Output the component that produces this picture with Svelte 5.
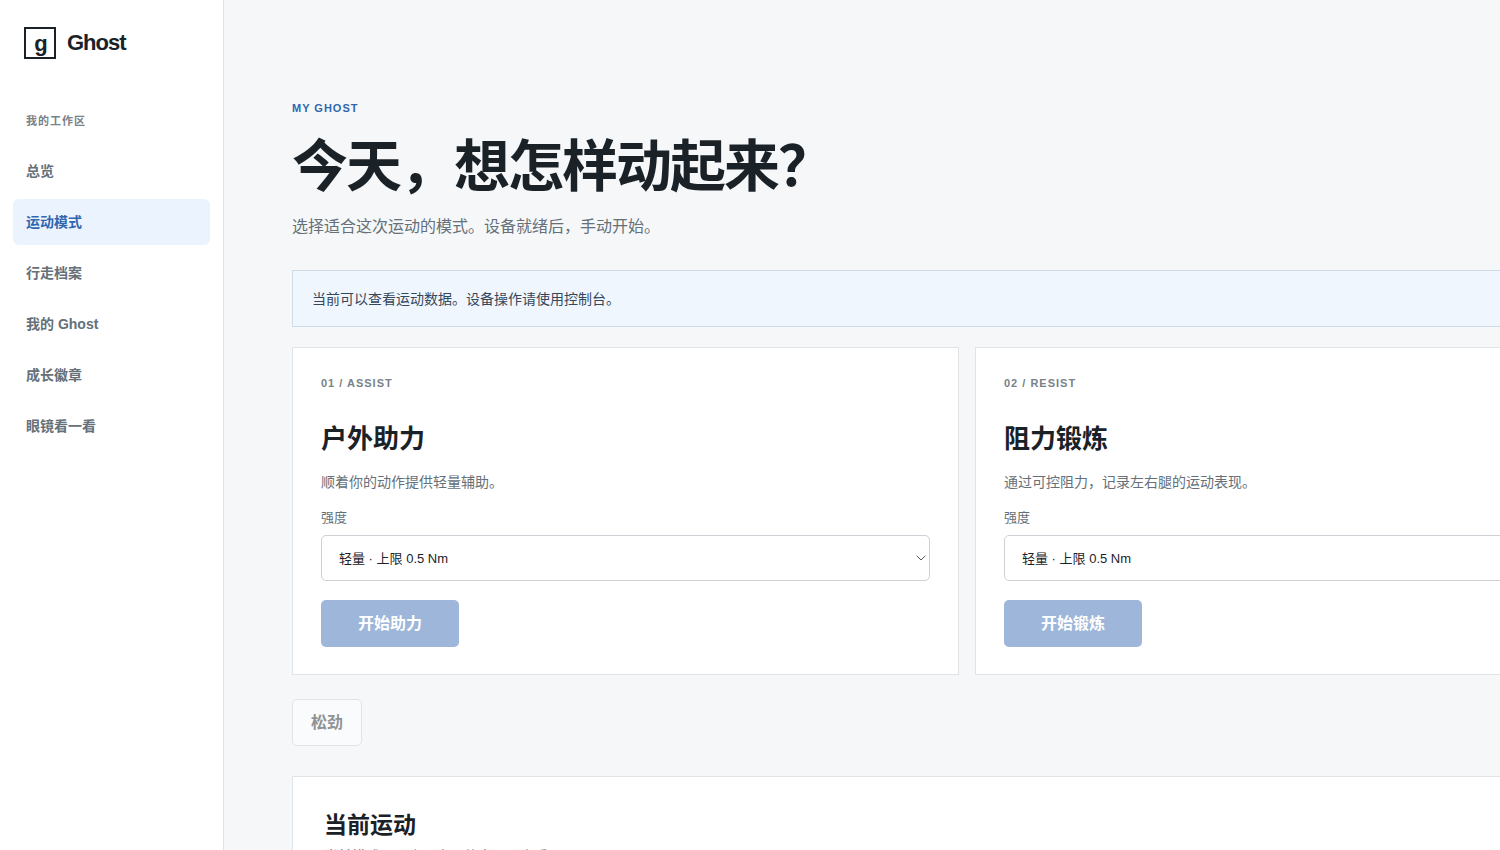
<script lang="ts">
	type Mode = {
		id: string
		tag: string
		title: string
		text: string
		action: string
	}

	const nav = ['总览', '运动模式', '行走档案', '我的 Ghost', '成长徽章', '眼镜看一看']
	const active = '运动模式'

	const modes: Mode[] = [
		{
			id: 'assist',
			tag: '01 / ASSIST',
			title: '户外助力',
			text: '顺着你的动作提供轻量辅助。',
			action: '开始助力',
		},
		{
			id: 'resist',
			tag: '02 / RESIST',
			title: '阻力锻炼',
			text: '通过可控阻力，记录左右腿的运动表现。',
			action: '开始锻炼',
		},
	]
</script>

<div class="shell">
	<aside class="sidebar">
		<a class="brand" href="#home">
			<span class="mark">g</span>
			<span>Ghost</span>
		</a>
		<p class="nav-title">我的工作区</p>
		<nav>
			{#each nav as item}
				<a href="#{item}" class:active={item === active}>{item}</a>
			{/each}
		</nav>
	</aside>

	<main>
		<header>
			<p class="eyebrow">MY GHOST</p>
			<h1>今天，想怎样动起来？</h1>
			<p class="lead">选择适合这次运动的模式。设备就绪后，手动开始。</p>
		</header>

		<p class="notice">当前可以查看运动数据。设备操作请使用控制台。</p>

		<div class="modes">
			{#each modes as mode (mode.id)}
				<article class="card">
					<p class="tag">{mode.tag}</p>
					<h2>{mode.title}</h2>
					<p class="text">{mode.text}</p>
					<label for="level-{mode.id}">强度</label>
					<div class="select">
						<select id="level-{mode.id}">
							<option>轻量 · 上限 0.5 Nm</option>
						</select>
						<svg viewBox="0 0 10 6" aria-hidden="true">
							<path d="M0.7 0.8 5 5 9.3 0.8" />
						</svg>
					</div>
					<button class="primary" disabled>{mode.action}</button>
				</article>
			{/each}
		</div>

		<button class="secondary" disabled>松劲</button>

		<section class="current">
			<h3>当前运动</h3>
			<p>当前模式、强度、实际状态，可查看。</p>
		</section>
	</main>
</div>

<style>
	:global(body) {
		background: #f5f7f9;
		overflow: hidden;
	}
	.shell {
		display: grid;
		grid-template-columns: 224px 1fr;
		height: 100vh;
		overflow: hidden;
		color: #1b2227;
		font-family: 'Liberation Sans', 'Noto Sans CJK SC', sans-serif;
		font-size: 14px;
		line-height: 20px;
	}
	.shell * {
		box-sizing: border-box;
	}
	p,
	h1,
	h2,
	h3 {
		margin: 0;
	}
	.sidebar {
		padding: 27px 13px;
		background: #fff;
		border-right: 1px solid #e0e4e7;
	}
	.brand {
		display: flex;
		align-items: center;
		gap: 11px;
		margin-left: 11px;
		color: inherit;
		font-size: 22px;
		font-weight: 700;
		line-height: 22px;
		letter-spacing: -1px;
		text-decoration: none;
	}
	.mark {
		display: grid;
		place-items: center;
		width: 32px;
		height: 32px;
		padding: 2px 0 0 1px;
		border: 2px solid #1b2227;
	}
	.nav-title {
		margin: 52px 13px 17px;
		color: #78828a;
		font-size: 11px;
		font-weight: 700;
		letter-spacing: 1px;
	}
	nav {
		display: grid;
		gap: 5px;
	}
	nav a {
		padding: 13px;
		border-radius: 6px;
		color: #657078;
		font-weight: 700;
		text-decoration: none;
	}
	nav a.active {
		background: #eaf3fe;
		color: #3167ae;
	}
	main {
		/* both mode cards stay side by side, the rest runs off to the right */
		min-width: 1486px;
		padding: 98px 68px;
	}
	.eyebrow {
		color: #3167ae;
		font-size: 11px;
		font-weight: 700;
		letter-spacing: 1px;
	}
	h1 {
		margin: 17px 0 18px;
		font-size: 56px;
		line-height: 64px;
		letter-spacing: -2px;
	}
	.lead {
		color: #657078;
		font-size: 16px;
	}
	.notice {
		margin: 33px 0 20px;
		padding: 18px 19px 17px;
		background: #f0f6fe;
		border: 1px solid #cfdbe6;
		color: #35475a;
	}
	.modes {
		display: grid;
		grid-template-columns: 1fr 1fr;
		gap: 16px;
	}
	.card {
		padding: 25px 28px 27px;
		background: #fff;
		border: 1px solid #e0e4e7;
	}
	.tag {
		color: #78828a;
		font-size: 11px;
		font-weight: 700;
		letter-spacing: 1px;
	}
	h2 {
		margin: 28px 0 15px;
		font-size: 26px;
		line-height: 36px;
	}
	.text {
		color: #657078;
	}
	label {
		display: block;
		margin: 16px 0 7px;
		color: #657078;
		font-size: 13px;
	}
	.select {
		position: relative;
	}
	select {
		display: block;
		width: 100%;
		height: 46px;
		padding: 2px 17px 0;
		appearance: none;
		background: #fff;
		border: 1px solid #cdd1d5;
		border-radius: 5px;
		color: #1b2227;
		font: inherit;
		font-size: 13px;
	}
	.select svg {
		position: absolute;
		top: 20px;
		right: 4px;
		width: 10px;
		height: 6px;
		fill: none;
		stroke: #555;
		pointer-events: none;
	}
	button {
		height: 47px;
		padding: 1px 18px 0;
		border-radius: 5px;
		font: inherit;
		font-size: 16px;
		font-weight: 700;
	}
	.primary {
		display: block;
		min-width: 138px;
		margin-top: 19px;
		border: 0;
		background: #9db6da;
		color: #fff;
	}
	.secondary {
		display: block;
		margin: 24px 0 30px;
		background: #fafbfd;
		border: 1px solid #e0e4e7;
		color: #8f9396;
	}
	.current {
		padding: 32px 31px;
		background: #fff;
		border: 1px solid #e0e4e7;
	}
	h3 {
		font-size: 23px;
		line-height: 32px;
	}
	.current p {
		margin-top: 5px;
		color: #657078;
	}
</style>
